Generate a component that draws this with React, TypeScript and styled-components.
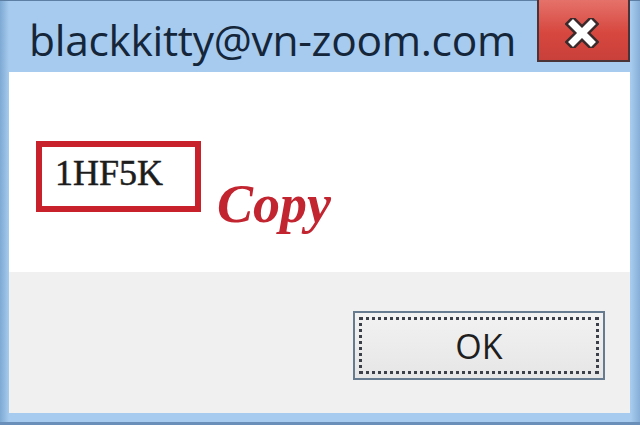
import React from 'react';
import styled, { createGlobalStyle } from 'styled-components';

const GlobalStyle = createGlobalStyle`
  html, body {
    margin: 0;
    padding: 0;
    background: #a6cbee;
  }
`;

const Window = styled.div`
  width: 640px;
  height: 425px;
  box-sizing: border-box;
  display: flex;
  flex-direction: column;
  background: linear-gradient(to right, #7ea9d3 0px, #a6cbee 9px, #a6cbee 631px, #86aed6 640px);
  border-top: 1px solid #5d7fa3;
  border-bottom: 3px solid #6a8fb8;
  padding: 0 10px 9px 9px;
`;

const TitleBar = styled.div`
  height: 71px;
  display: flex;
  align-items: flex-start;
  justify-content: space-between;
`;

const Title = styled.span`
  font-family: 'Open Sans', 'Noto Sans', sans-serif;
  font-size: 42.5px;
  color: #15263a;
  margin: 11px 0 0 20px;
  letter-spacing: -0.3px;
  line-height: 1.3;
`;

const CloseButton = styled.div`
  width: 93px;
  height: 62px;
  margin-top: -1px;
  box-sizing: border-box;
  border: 2px solid #4a3438;
  border-top: none;
  background: linear-gradient(to bottom, #e5726a, #d6473f 55%, #c9403a);
  display: flex;
  align-items: center;
  justify-content: center;
  padding: 6px 4px 0 0;
`;

const Client = styled.div`
  flex: 1;
  display: flex;
  flex-direction: column;
  background: #ffffff;
`;

const Content = styled.div`
  height: 200px;
  box-sizing: border-box;
  padding: 69px 0 0 27px;
  display: flex;
  align-items: flex-start;
`;

const CodeBox = styled.div`
  width: 165px;
  height: 71px;
  box-sizing: border-box;
  border: 6px solid #c9212c;
  font-family: 'Liberation Serif', 'Times New Roman', serif;
  font-size: 36px;
  color: #1c1c1c;
  padding: 8px 0 0 13px;
  line-height: 1;
  -webkit-text-stroke: 0.5px #1c1c1c;
`;

const CopyLabel = styled.span`
  font-family: 'Liberation Serif', 'Times New Roman', serif;
  font-weight: bold;
  font-style: italic;
  font-size: 54px;
  color: #c22430;
  margin: 36px 0 0 16px;
  line-height: 1;
`;

const Footer = styled.div`
  flex: 1;
  background: #f0f0f0;
  display: flex;
  justify-content: flex-end;
  align-items: flex-start;
  padding: 39px 25px 0 0;
`;

const OkButton = styled.button`
  width: 252px;
  height: 69px;
  box-sizing: border-box;
  border: 2px solid #667b90;
  background: linear-gradient(to bottom, #f2f2f2, #e6e6e6);
  padding: 4px;
  display: flex;
`;

const FocusRect = styled.span`
  flex: 1;
  border: 3px dotted #3a3f48;
  display: flex;
  align-items: center;
  justify-content: center;
  font-family: 'Open Sans', 'Noto Sans', sans-serif;
  font-size: 34px;
  color: #1e1e1e;
`;

const CloseGlyph = () => (
  <svg width="34" height="30" viewBox="0 0 34 30">
    <path d="M8 6 L26 24 M26 6 L8 24" stroke="#3b2a2c" strokeWidth="12" strokeLinecap="square" />
    <path d="M8 6 L26 24 M26 6 L8 24" stroke="#ffffff" strokeWidth="7" strokeLinecap="square" />
  </svg>
);

const App: React.FC = () => (
  <>
    <GlobalStyle />
    <Window>
      <TitleBar>
        <Title>blackkitty@vn-zoom.com</Title>
        <CloseButton>
          <CloseGlyph />
        </CloseButton>
      </TitleBar>
      <Client>
        <Content>
          <CodeBox>1HF5K</CodeBox>
          <CopyLabel>Copy</CopyLabel>
        </Content>
        <Footer>
          <OkButton>
            <FocusRect>OK</FocusRect>
          </OkButton>
        </Footer>
      </Client>
    </Window>
  </>
);

export default App;
